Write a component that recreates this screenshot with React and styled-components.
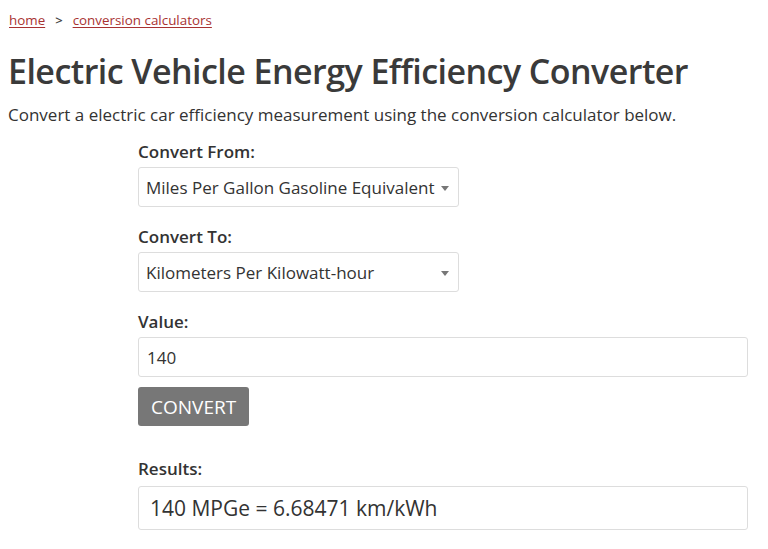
import styled, { createGlobalStyle } from "styled-components";

const GlobalStyle = createGlobalStyle`
  body {
    margin: 0;
    background: #fff;
    font-family: "Open Sans", "Noto Sans", sans-serif;
    color: #333;
  }
`;

const Page = styled.div`
  padding: 8px 8px 0 8px;
`;

const Breadcrumb = styled.nav`
  display: flex;
  align-items: center;
  gap: 10px;
  height: 24px;
  padding-left: 1px;
  font-size: 13.4px;
`;

const Crumb = styled.a`
  color: #a83232;
  text-decoration: underline;
  text-underline-offset: 2px;
`;

const Sep = styled.span`
  color: #444;
  font-size: 13px;
  font-weight: 600;
`;

const Title = styled.h1`
  margin: 17px 0 0;
  font-size: 34px;
  font-weight: 600;
  line-height: 44px;
  color: #3a3a3a;
  letter-spacing: -0.55px;
`;

const Lead = styled.p`
  margin: 10px 0 0;
  font-size: 17px;
  line-height: 24px;
  color: #333;
`;

const Form = styled.form`
  margin: 14px 12px 0 130px;
  display: flex;
  flex-direction: column;
`;

const Group = styled.div`
  display: flex;
  flex-direction: column;
  margin-bottom: ${({ $gap }) => $gap ?? 19}px;
`;

const Label = styled.label`
  font-size: 17px;
  font-weight: 600;
  line-height: 22px;
  margin-bottom: ${({ $mb }) => $mb ?? 4}px;
  color: #333;
`;

const SelectBox = styled.div`
  position: relative;
  width: 321px;
  height: 40px;
  box-sizing: border-box;
  border: 1px solid #ddd;
  border-radius: 3px;
  display: flex;
  align-items: center;
  padding: 0 7px;
  font-size: 17px;
  color: #333;
`;

const Caret = styled.span`
  position: absolute;
  right: 9px;
  top: 18px;
  width: 0;
  height: 0;
  border-left: 4px solid transparent;
  border-right: 4px solid transparent;
  border-top: 5px solid #777;
`;

const Field = styled.div`
  height: ${({ $h }) => $h || 40}px;
  box-sizing: border-box;
  border: 1px solid #ddd;
  border-radius: 3px;
  display: flex;
  align-items: center;
  padding: 0 ${({ $pad }) => $pad || 8}px;
  font-size: ${({ $size }) => $size || 17}px;
  color: #333;
`;

const Button = styled.button`
  align-self: flex-start;
  height: 39px;
  padding: 0 13px;
  border: none;
  border-radius: 3px;
  background: #777;
  color: #fff;
  font-family: inherit;
  font-size: 19px;
  margin-bottom: 32px;
`;

export default function App() {
  return (
    <>
      <GlobalStyle />
      <Page>
        <Breadcrumb>
          <Crumb>home</Crumb>
          <Sep>&gt;</Sep>
          <Crumb>conversion calculators</Crumb>
        </Breadcrumb>
        <Title>Electric Vehicle Energy Efficiency Converter</Title>
        <Lead>
          Convert a electric car efficiency measurement using the conversion calculator below.
        </Lead>
        <Form>
          <Group>
            <Label>Convert From:</Label>
            <SelectBox>
              Miles Per Gallon Gasoline Equivalent
              <Caret />
            </SelectBox>
          </Group>
          <Group>
            <Label>Convert To:</Label>
            <SelectBox>
              Kilometers Per Kilowatt-hour
              <Caret />
            </SelectBox>
          </Group>
          <Group $gap={10}>
            <Label>Value:</Label>
            <Field>140</Field>
          </Group>
          <Button type="button">CONVERT</Button>
          <Group>
            <Label $mb={6}>Results:</Label>
            <Field $h={44} $pad={11} $size={21}>
              140 MPGe = 6.68471 km/kWh
            </Field>
          </Group>
        </Form>
      </Page>
    </>
  );
}
